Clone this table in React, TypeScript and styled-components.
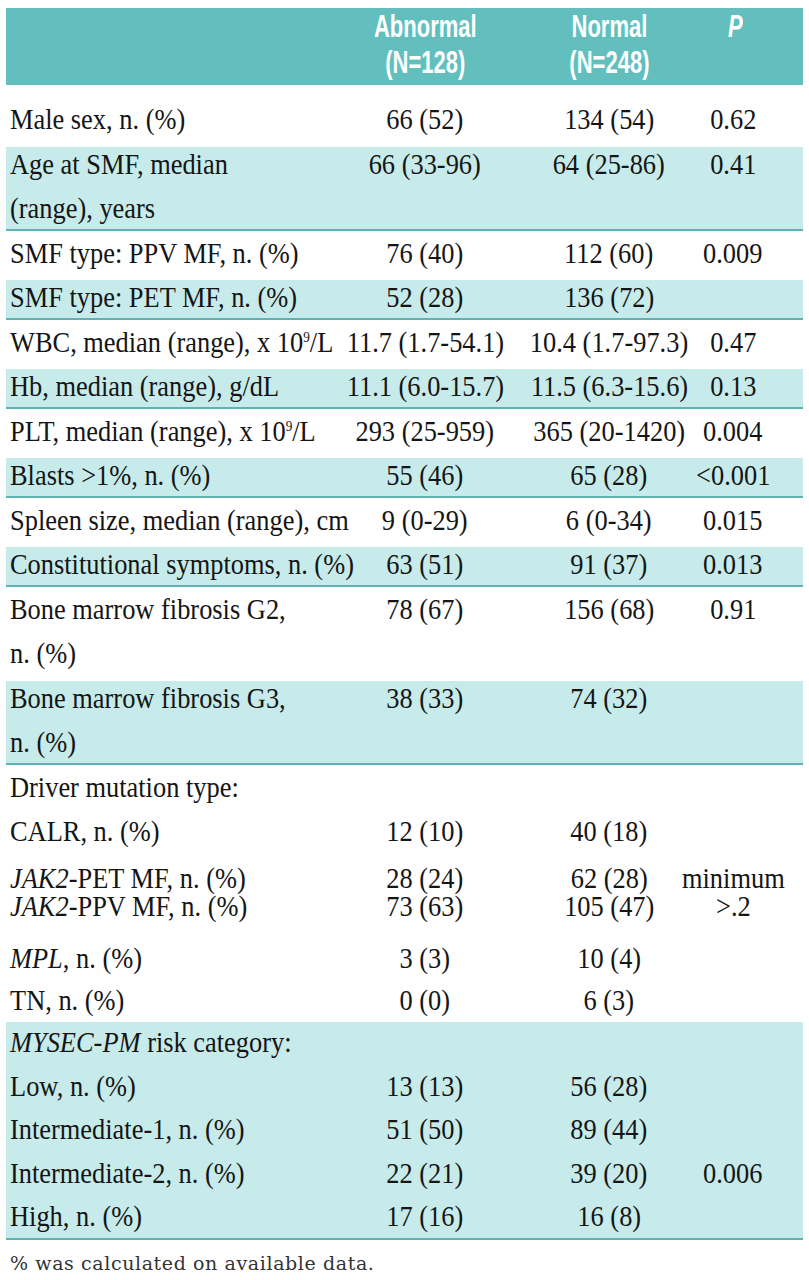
import React from "react";
import styled, { createGlobalStyle, css } from "styled-components";

const GlobalStyle = createGlobalStyle`
  html, body { margin: 0; padding: 0; background: #ffffff; }
  body { font-family: "Liberation Serif", "Times New Roman", serif; color: #151515; }
`;

const HEAD_BG = "#62bfbe";
const SHADE = "#c6ebea";
const RULE = "#5fb2b1";
const COLS = "352px 134px 196px 115px";

const Page = styled.div`
  padding: 8px 6px 0 6px;
  width: 797px;
`;

const HeaderRow = styled.div`
  display: grid;
  grid-template-columns: ${COLS};
  background: ${HEAD_BG};
  color: #ffffff;
  font-family: "Liberation Sans", Arial, sans-serif;
  font-weight: 700;
  font-size: 31px;
  line-height: 36px;
  padding: 1px 0 4px 0;
  margin-bottom: 12px;
`;

const HeadText = styled.span`
  display: inline-block;
  white-space: nowrap;
  text-align: center;
  transform: scaleX(0.71);
  transform-origin: center;
`;

const shadedBg = (gap: number) => css`
  background: linear-gradient(
    to bottom,
    #ffffff 0,
    #ffffff ${gap}px,
    ${SHADE} ${gap}px,
    ${SHADE} calc(100% - 2px),
    ${RULE} calc(100% - 2px),
    ${RULE} 100%
  );
`;

const Row = styled.div<{ $shaded?: boolean; $lh?: number; $pt?: number; $pb?: number }>`
  display: grid;
  grid-template-columns: ${COLS};
  font-size: 30px;
  line-height: ${(p) => p.$lh ?? 44.5}px;
  padding-top: ${(p) => p.$pt ?? 0}px;
  padding-bottom: ${(p) => p.$pb ?? 0}px;
  ${(p) => p.$shaded && shadedBg(5)}
`;

const Section = styled.div<{ $gap?: number }>`
  ${(p) => shadedBg(p.$gap ?? 2)}
  padding-bottom: 2px;
`;

const Cell = styled.div<{ $left?: boolean; $pl?: number; $pr?: number }>`
  display: flex;
  justify-content: ${(p) => (p.$left ? "flex-start" : "center")};
  padding-left: ${(p) => p.$pl ?? 0}px;
  padding-right: ${(p) => p.$pr ?? 0}px;
  min-width: 0;
`;

const Txt = styled.span<{ $left?: boolean; $scale?: number }>`
  display: inline-block;
  white-space: nowrap;
  text-align: ${(p) => (p.$left ? "left" : "center")};
  transform: scaleX(${(p) => p.$scale ?? 0.88});
  transform-origin: ${(p) => (p.$left ? "left center" : "center")};
`;

const Em = styled.i`
  font-style: italic;
`;

const Sup = styled.sup`
  font-size: 15px;
  line-height: 0;
  vertical-align: 10px;
`;

const Footer = styled.div`
  margin-top: 11px;
  padding-left: 4px;
  font-family: "DejaVu Serif", "Liberation Serif", serif;
  font-size: 19px;
  letter-spacing: 0.6px;
  line-height: 24px;
  color: #333333;
`;

const PItalic = styled.span`
  font-style: italic;
`;

type Line = {
  label: React.ReactNode;
  a?: React.ReactNode;
  n?: React.ReactNode;
  p?: React.ReactNode;
  shaded?: boolean;
};

const topRows: Line[] = [
  { label: "Male sex, n. (%)", a: "66 (52)", n: "134 (54)", p: "0.62" },
  {
    label: (
      <>
        Age at SMF, median
        <br />
        (range), years
      </>
    ),
    a: "66 (33-96)",
    n: "64 (25-86)",
    p: "0.41",
    shaded: true,
  },
  { label: "SMF type: PPV MF, n. (%)", a: "76 (40)", n: "112 (60)", p: "0.009" },
  { label: "SMF type: PET MF, n. (%)", a: "52 (28)", n: "136 (72)", shaded: true },
  {
    label: (
      <>
        WBC, median (range), x 10<Sup>9</Sup>/L
      </>
    ),
    a: "11.7 (1.7-54.1)",
    n: "10.4 (1.7-97.3)",
    p: "0.47",
  },
  { label: "Hb, median (range), g/dL", a: "11.1 (6.0-15.7)", n: "11.5 (6.3-15.6)", p: "0.13", shaded: true },
  {
    label: (
      <>
        PLT, median (range), x 10<Sup>9</Sup>/L
      </>
    ),
    a: "293 (25-959)",
    n: "365 (20-1420)",
    p: "0.004",
  },
  { label: "Blasts >1%, n. (%)", a: "55 (46)", n: "65 (28)", p: "<0.001", shaded: true },
  { label: "Spleen size, median (range), cm", a: "9 (0-29)", n: "6 (0-34)", p: "0.015" },
  { label: "Constitutional symptoms, n. (%)", a: "63 (51)", n: "91 (37)", p: "0.013", shaded: true },
  {
    label: (
      <>
        Bone marrow fibrosis G2,
        <br />
        n. (%)
      </>
    ),
    a: "78 (67)",
    n: "156 (68)",
    p: "0.91",
  },
  {
    label: (
      <>
        Bone marrow fibrosis G3,
        <br />
        n. (%)
      </>
    ),
    a: "38 (33)",
    n: "74 (32)",
    shaded: true,
  },
];

const riskRows: Line[] = [
  { label: "Low, n. (%)", a: "13 (13)", n: "56 (28)" },
  { label: "Intermediate-1, n. (%)", a: "51 (50)", n: "89 (44)" },
  { label: "Intermediate-2, n. (%)", a: "22 (21)", n: "39 (20)", p: "0.006" },
  { label: "High, n. (%)", a: "17 (16)", n: "16 (8)" },
];

const DataRow: React.FC<{ line: Line; lh?: number; pt?: number; pb?: number }> = ({ line, lh, pt, pb }) => (
  <Row $shaded={line.shaded} $lh={lh} $pt={pt} $pb={pb}>
    <Cell $left $pl={4}>
      <Txt $left>{line.label}</Txt>
    </Cell>
    <Cell>{line.a != null && <Txt>{line.a}</Txt>}</Cell>
    <Cell $pl={38}>{line.n != null && <Txt>{line.n}</Txt>}</Cell>
    <Cell $pr={25}>{line.p != null && <Txt>{line.p}</Txt>}</Cell>
  </Row>
);

export default function App() {
  return (
    <>
      <GlobalStyle />
      <Page>
        <HeaderRow>
          <Cell />
          <Cell>
            <HeadText>
              Abnormal
              <br />
              (N=128)
            </HeadText>
          </Cell>
          <Cell $pl={38}>
            <HeadText>
              Normal
              <br />
              (N=248)
            </HeadText>
          </Cell>
          <Cell $pr={20}>
            <HeadText>
              <PItalic>P</PItalic>
            </HeadText>
          </Cell>
        </HeaderRow>

        {topRows.map((line, i) => (
          <DataRow key={i} line={line} />
        ))}

        <DataRow line={{ label: "Driver mutation type:" }} />
        <DataRow line={{ label: "CALR, n. (%)", a: "12 (10)", n: "40 (18)" }} />
        <DataRow
          lh={28}
          pt={10.5}
          pb={15.75}
          line={{
            label: (
              <>
                <Em>JAK2</Em>-PET MF, n. (%)
                <br />
                <Em>JAK2</Em>-PPV MF, n. (%)
              </>
            ),
            a: (
              <>
                28 (24)
                <br />
                73 (63)
              </>
            ),
            n: (
              <>
                62 (28)
                <br />
                105 (47)
              </>
            ),
            p: (
              <>
                minimum
                <br />
                &gt;.2
              </>
            ),
          }}
        />
        <DataRow
          line={{
            label: (
              <>
                <Em>MPL</Em>, n. (%)
              </>
            ),
            a: "3 (3)",
            n: "10 (4)",
          }}
        />
        <DataRow lh={40} line={{ label: "TN, n. (%)", a: "0 (0)", n: "6 (3)" }} />

        <Section $gap={2}>
          <DataRow
            lh={43.5}
            line={{
              label: (
                <>
                  <Em>MYSEC-PM</Em> risk category:
                </>
              ),
            }}
          />
          {riskRows.map((line, i) => (
            <DataRow key={i} lh={43.5} line={line} />
          ))}
        </Section>

        <Footer>% was calculated on available data.</Footer>
      </Page>
    </>
  );
}
